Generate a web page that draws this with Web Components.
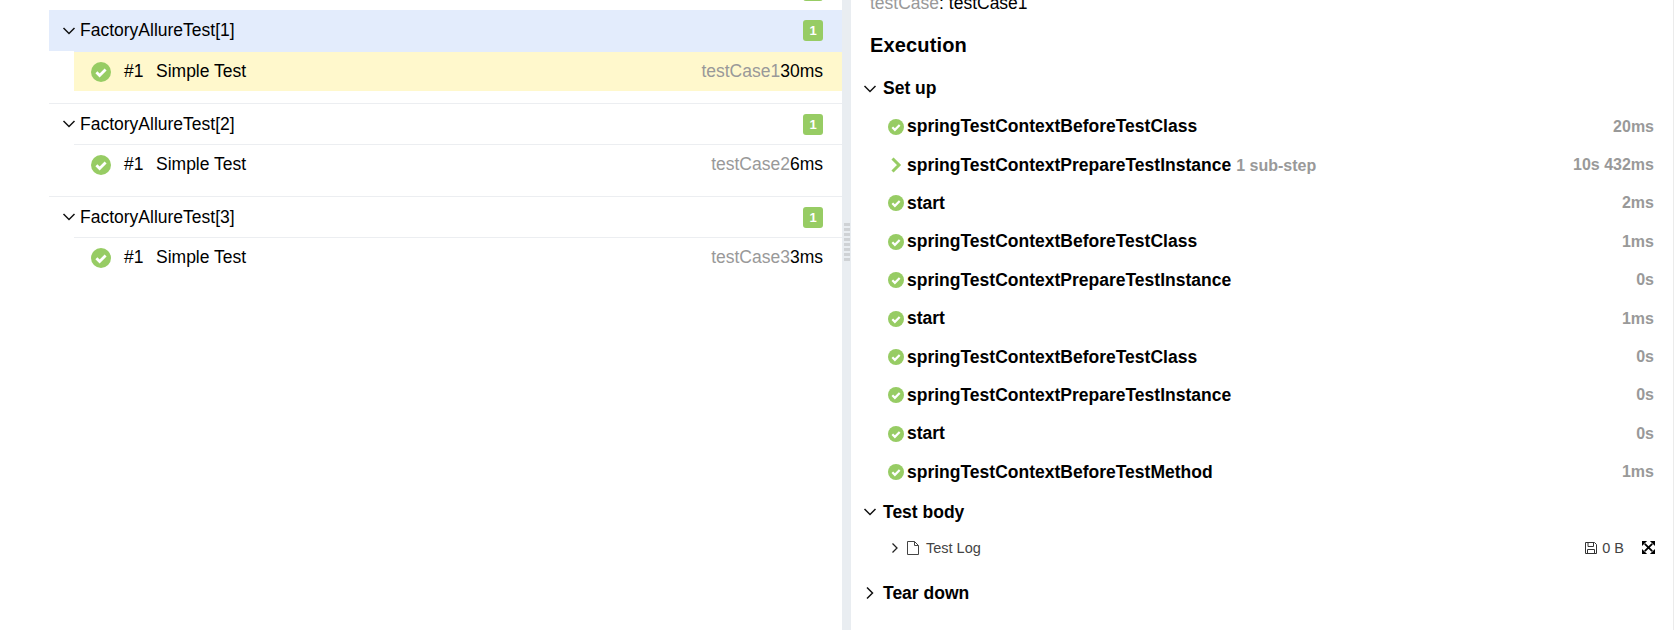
<!DOCTYPE html>
<html>
<head>
<meta charset="utf-8">
<style>
  html, body { margin: 0; height: 100%; overflow: hidden; background: #fff; }
  body { font-family: "Liberation Sans", Arial, sans-serif; color: #000; }
</style>
</head>
<body>
<split-view>
  <div slot="left">
    <tree-group name="" count="" cut></tree-group>
    <tree-group name="FactoryAllureTest[1]" count="1" selected>
      <tree-leaf param="testCase1" time="30ms" selected></tree-leaf>
    </tree-group>
    <tree-group name="FactoryAllureTest[2]" count="1">
      <tree-leaf param="testCase2" time="6ms"></tree-leaf>
    </tree-group>
    <tree-group name="FactoryAllureTest[3]" count="1">
      <tree-leaf param="testCase3" time="3ms"></tree-leaf>
    </tree-group>
  </div>
  <div slot="right">
    <exec-pane>
      <exec-stage title="Set up" open>
        <exec-step name="springTestContextBeforeTestClass" time="20ms"></exec-step>
        <exec-step name="springTestContextPrepareTestInstance" sub="1 sub-step" time="10s 432ms" expandable></exec-step>
        <exec-step name="start" time="2ms"></exec-step>
        <exec-step name="springTestContextBeforeTestClass" time="1ms"></exec-step>
        <exec-step name="springTestContextPrepareTestInstance" time="0s"></exec-step>
        <exec-step name="start" time="1ms"></exec-step>
        <exec-step name="springTestContextBeforeTestClass" time="0s"></exec-step>
        <exec-step name="springTestContextPrepareTestInstance" time="0s"></exec-step>
        <exec-step name="start" time="0s"></exec-step>
        <exec-step name="springTestContextBeforeTestMethod" time="1ms"></exec-step>
      </exec-stage>
      <exec-stage title="Test body" open>
        <attachment-row name="Test Log" size="0 B"></attachment-row>
      </exec-stage>
      <exec-stage title="Tear down"></exec-stage>
    </exec-pane>
  </div>
</split-view>

<script>
const CHECK = `<svg viewBox="0 0 20 20" width="100%" height="100%"><circle cx="10" cy="10" r="10" fill="#97cc64"/><path d="M5.4 10.3l3.2 3.2 6-6" fill="none" stroke="#fff" stroke-width="2.8"/></svg>`;
const DOWN = `<svg viewBox="0 0 14 14" width="14" height="14"><path d="M1.5 4l5.5 5.5L12.500 4" fill="none" stroke="#111" stroke-width="1.500"/></svg>`;
const RIGHT = `<svg viewBox="0 0 14 14" width="14" height="14"><path d="M4 1.500L9.500 7 4 12.500" fill="none" stroke="#111" stroke-width="1.500"/></svg>`;

class SplitView extends HTMLElement {
  connectedCallback() {
    const shadow = this.attachShadow({ mode: "open" });
    shadow.innerHTML = `
    <style>
      :host { display: flex; height: 630px; width: 1674px; box-sizing: border-box; border-right: 1px solid #ebebeb; }
      .left { width: 842px; flex: none; overflow: hidden; }
      .gutter { width: 9px; flex: none; background: #e9edf1; padding-top: 223px; box-sizing: border-box; }
      .grip { height: 38px; width: 6px; margin-left: 2px; background: repeating-linear-gradient(#cfd2d5 0 3px, transparent 3px 5px); }
      .right { flex: 1; min-width: 0; overflow: hidden; }
    </style>
    <div class="left"><slot name="left"></slot></div>
    <div class="gutter"><div class="grip"></div></div>
    <div class="right"><slot name="right"></slot></div>`;
  }
}

class TreeGroup extends HTMLElement {
  connectedCallback() {
    const shadow = this.attachShadow({ mode: "open" });
    const cut = this.hasAttribute("cut");
    shadow.innerHTML = `
    <style>
      :host { display: block; padding-left: 49px; }
      .head { display: flex; align-items: center; height: 41px; padding: 0 19px 0 13px; box-sizing: border-box; font-size: 17.500px; }
      :host([selected]) .head { background: #e3ecfc; }
      :host(:not([selected])) .head { border-top: 1px solid #eceef1; }
      .arrow { width: 14px; height: 14px; margin-right: 4px; display: flex; }
      .name { flex: 1; }
      .badge { background: #97cc64; color: #fff; font-size: 13px; font-weight: bold; border-radius: 3px; width: 20px; height: 21px; line-height: 21px; text-align: center; }
      .kids { padding: 0 0 12px 25px; }
      :host([cut]) { height: 10px; overflow: hidden; }
      :host([cut]) .head { margin-top: -30px; border: 0; }
    </style>
    <div class="head">
      <span class="arrow">${cut ? "" : DOWN}</span>
      <span class="name">${this.getAttribute("name")}</span>
      <span class="badge">${this.getAttribute("count")}</span>
    </div>
    <div class="kids"><slot></slot></div>`;
  }
}

class TreeLeaf extends HTMLElement {
  connectedCallback() {
    const shadow = this.attachShadow({ mode: "open" });
    shadow.innerHTML = `
    <style>
      :host { display: flex; align-items: center; height: 40px; padding: 0 19px 0 17px; box-sizing: border-box; font-size: 17.500px; border-top: 1px solid #eceef1; }
      :host([selected]) { background: #fff8cc; border-top-color: #e3ecfc; }
      .ic { width: 20px; height: 20px; margin-right: 13px; }
      .num { width: 32px; }
      .name { flex: 1; }
      .param { color: #999; }
    </style>
    <span class="ic">${CHECK}</span>
    <span class="num">#1</span>
    <span class="name">Simple Test</span>
    <span class="param">${this.getAttribute("param")}</span><span>${this.getAttribute("time")}</span>`;
  }
}

class ExecPane extends HTMLElement {
  connectedCallback() {
    const shadow = this.attachShadow({ mode: "open" });
    shadow.innerHTML = `
    <style>
      :host { display: block; padding: 0 19px 0 19px; }
      .meta { font-size: 17.500px; height: 15px; margin-top: -6px; line-height: 18px; }
      .meta span { color: #999; }
      h3 { font-size: 20px; font-weight: bold; margin: 24px 0 11.500px; line-height: 24px; letter-spacing: .15px; }
    </style>
    <div class="meta"><span>testCase</span>: testCase1</div>
    <h3>Execution</h3>
    <slot></slot>`;
  }
}

class ExecStage extends HTMLElement {
  connectedCallback() {
    const shadow = this.attachShadow({ mode: "open" });
    const open = this.hasAttribute("open");
    shadow.innerHTML = `
    <style>
      :host { display: block; margin-left: -7px; padding-bottom: 1px; }
      .head { display: flex; align-items: center; height: 40px; margin-bottom: -1px; font-size: 17.500px; font-weight: bold; }
      .arrow { width: 14px; height: 14px; margin-right: 6px; display: flex; }
    </style>
    <div class="head"><span class="arrow">${open ? DOWN : RIGHT}</span><span>${this.getAttribute("title")}</span></div>
    <slot></slot>`;
  }
}

class ExecStep extends HTMLElement {
  connectedCallback() {
    const shadow = this.attachShadow({ mode: "open" });
    const sub = this.getAttribute("sub");
    const icon = this.hasAttribute("expandable")
      ? `<svg viewBox="0 0 16 16" width="16" height="16"><path d="M4.500 1.500L11 8l-6.500 6.500" fill="none" stroke="#97cc64" stroke-width="3"/></svg>`
      : CHECK;
    shadow.innerHTML = `
    <style>
      :host { display: flex; align-items: center; height: 38.400px; padding-left: 25px; font-size: 17.500px; font-weight: bold; }
      .ic { width: 16px; height: 16px; margin-right: 3px; flex: none; display: flex; }
      .name { flex: 1; }
      .sub, .time { color: #999; font-size: 16px; }
      .sub { margin-left: 5px; }
    </style>
    <span class="ic">${icon}</span>
    <span class="name">${this.getAttribute("name")}${sub ? `<span class="sub">${sub}</span>` : ""}</span>
    <span class="time">${this.getAttribute("time")}</span>`;
  }
}

class AttachmentRow extends HTMLElement {
  connectedCallback() {
    const shadow = this.attachShadow({ mode: "open" });
    shadow.innerHTML = `
    <style>
      :host { display: flex; align-items: center; height: 33px; margin-bottom: 8px; padding-left: 26px; font-size: 14.500px; color: #444; }
      .arrow { width: 12px; height: 12px; margin-right: 5px; display: flex; }
      .doc { margin-right: 6px; display: flex; }
      .name { flex: 1; }
      .save { display: flex; margin-right: 4px; }
      .full { display: flex; margin-left: 18px; margin-right: -1px; }
    </style>
    <span class="arrow"><svg viewBox="0 0 12 12" width="12" height="12"><path d="M3.500 1.500L8 6l-4.500 4.500" fill="none" stroke="#222" stroke-width="1.300"/></svg></span>
    <span class="doc"><svg viewBox="0 0 14 16" width="14" height="16"><path d="M1.500 1.500h7l4 4v9h-11zM8.500 1.500v4h4" fill="none" stroke="#444"/></svg></span>
    <span class="name">${this.getAttribute("name")}</span>
    <span class="save"><svg viewBox="0 0 14 14" width="14" height="14"><path d="M1.500 1.500h9l2 2v9h-11zM4 1.500v4h5.500v-4M3.500 12.500v-4h7v4" fill="none" stroke="#333"/></svg></span>
    <span>${this.getAttribute("size")}</span>
    <span class="full"><svg viewBox="0 0 14 14" width="13" height="13"><path d="M3 3l8 8M11 3l-8 8" stroke="#000" stroke-width="2"/><path d="M0 0h5.500L0 5.500zM14 0v5.500L8.500 0zM0 14v-5.500L5.500 14zM14 14h-5.500L14 8.500z" fill="#000"/></svg></span>`;
  }
}

customElements.define("split-view", SplitView);
customElements.define("tree-group", TreeGroup);
customElements.define("tree-leaf", TreeLeaf);
customElements.define("exec-pane", ExecPane);
customElements.define("exec-stage", ExecStage);
customElements.define("exec-step", ExecStep);
customElements.define("attachment-row", AttachmentRow);
</script>
</body>
</html>
